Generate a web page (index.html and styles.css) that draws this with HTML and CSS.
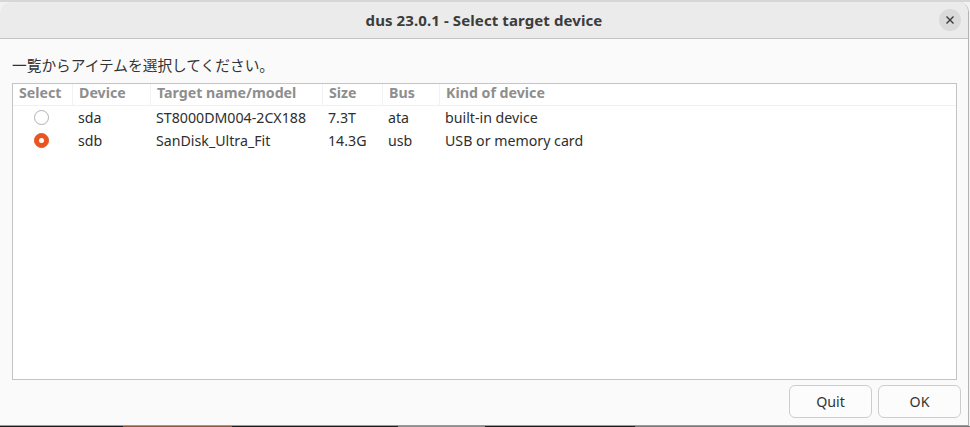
FILE: index.html
```html
<!DOCTYPE html>
<html lang="ja">
<head>
<meta charset="utf-8">
<title>dus 23.0.1 - Select target device</title>
<link rel="stylesheet" href="styles.css">
</head>
<body>
<div class="desk-top"></div>
<div class="window">
  <header class="titlebar">
    <div class="title">dus 23.0.1 - Select target device</div>
    <button class="close" aria-label="Close">
      <svg width="10" height="10" viewBox="0 0 10 10"><path d="M1.5 1.5 L8.5 8.5 M8.5 1.5 L1.5 8.5" stroke="#3a3a3a" stroke-width="1.4" fill="none"/></svg>
    </button>
  </header>
  <main class="content">
    <p class="prompt">一覧からアイテムを選択してください。</p>
    <div class="tree">
      <div class="row head">
        <div class="cell">Select</div>
        <div class="cell">Device</div>
        <div class="cell">Target name/model</div>
        <div class="cell">Size</div>
        <div class="cell">Bus</div>
        <div class="cell">Kind of device</div>
      </div>
      <div class="row">
        <div class="cell radio-cell"><span class="radio"></span></div>
        <div class="cell">sda</div>
        <div class="cell">ST8000DM004-2CX188</div>
        <div class="cell">7.3T</div>
        <div class="cell">ata</div>
        <div class="cell">built-in device</div>
      </div>
      <div class="row">
        <div class="cell radio-cell"><span class="radio checked"></span></div>
        <div class="cell">sdb</div>
        <div class="cell">SanDisk_Ultra_Fit</div>
        <div class="cell">14.3G</div>
        <div class="cell">usb</div>
        <div class="cell">USB or memory card</div>
      </div>
    </div>
    <div class="footer">
      <button class="btn">Quit</button>
      <button class="btn">OK</button>
    </div>
  </main>
</div>
<div class="desk-bottom">
  <span class="seg dark" style="width:123px"></span>
  <span class="seg brown" style="width:109px"></span>
  <span class="seg dark" style="width:166px"></span>
  <span class="seg grey" style="width:87px"></span>
  <span class="seg dark" style="width:150px"></span>
  <span class="seg grey2" style="flex:1"></span>
</div>
</body>
</html>
```
FILE: styles.css
```css
* { box-sizing: border-box; }
html, body {
  margin: 0;
  padding: 0;
  width: 970px;
  height: 427px;
  overflow: hidden;
  background: #f2f2f2;
  font-family: "Noto Sans", "Noto Sans CJK JP", sans-serif;
  color: #333333;
}
.desk-top {
  height: 2px;
  background: #d6d6d6;
}
.window {
  width: 969px;
  height: 424px;
  background: #fafafa;
  border-radius: 10px 10px 0 0;
  border-right: 1px solid #b4b4b4;
  border-bottom: 1px solid #9a9a9a;
  display: flex;
  flex-direction: column;
  overflow: hidden;
}
.titlebar {
  height: 37px;
  flex: none;
  background: #ebebeb;
  border-bottom: 1px solid #c4c4c4;
  display: flex;
  align-items: center;
  justify-content: center;
  position: relative;
}
.title {
  font-weight: bold;
  font-size: 15px;
  color: #3c3c3c;
  letter-spacing: 0.1px;
}
.close {
  position: absolute;
  right: 7px;
  top: 7px;
  width: 22px;
  height: 22px;
  border-radius: 50%;
  border: none;
  background: #dadada;
  padding: 0;
  display: flex;
  align-items: center;
  justify-content: center;
}
.content {
  flex: 1;
  padding: 0 11px 0 12px;
  display: flex;
  flex-direction: column;
}
.prompt {
  margin: 16px 0 0 0;
  height: 20px;
  line-height: 20px;
  font-size: 14.7px;
  color: #333;
}
.tree {
  margin-top: 8px;
  height: 297px;
  background: #ffffff;
  border: 1px solid #c4c4c4;
}
.row {
  display: grid;
  grid-template-columns: 60px 78px 172px 60px 57px 1fr;
  height: 23px;
  align-items: center;
  font-size: 14.2px;
  color: #2e2e2e;
}
.row .cell {
  padding-left: 5px;
  white-space: nowrap;
}
.row.head {
  height: 22px;
  border-bottom: 1px solid #f0f0f0;
  font-weight: bold;
  color: #8e8e8e;
  align-items: start;
}
.row.head .cell {
  padding-left: 6px;
  border-right: 1px solid #f2f2f2;
  line-height: 18px;
  height: 21px;
}
.row.head .cell:last-child { border-right: none; }
.radio-cell {
  display: flex;
  align-items: center;
}
.row .radio-cell { padding-left: 21px; }
.radio {
  width: 15px;
  height: 15px;
  border-radius: 50%;
  border: 1px solid #b0b0b0;
  background: #ffffff;
  display: flex;
  align-items: center;
  justify-content: center;
}
.radio.checked {
  border-color: #e95420;
  background: #e95420;
}
.radio.checked::after {
  content: "";
  width: 5px;
  height: 5px;
  border-radius: 50%;
  background: #ffffff;
}
.footer {
  margin-top: 5px;
  margin-right: -4px;
  display: flex;
  justify-content: flex-end;
  gap: 6px;
}
.btn {
  width: 83px;
  height: 33px;
  border: 1px solid #cdcdcd;
  border-radius: 6px;
  background: #fcfcfc;
  font-family: "Noto Sans", sans-serif;
  font-size: 14.2px;
  color: #333;
  padding: 0;
}
.desk-bottom {
  height: 2px;
  display: flex;
}
.seg { display: block; height: 2px; }
.seg.dark { background: #1d1d1d; }
.seg.brown { background: #8a5a3c; }
.seg.grey { background: #8c8c8c; }
.seg.grey2 { background: #7a7a7a; }
```
